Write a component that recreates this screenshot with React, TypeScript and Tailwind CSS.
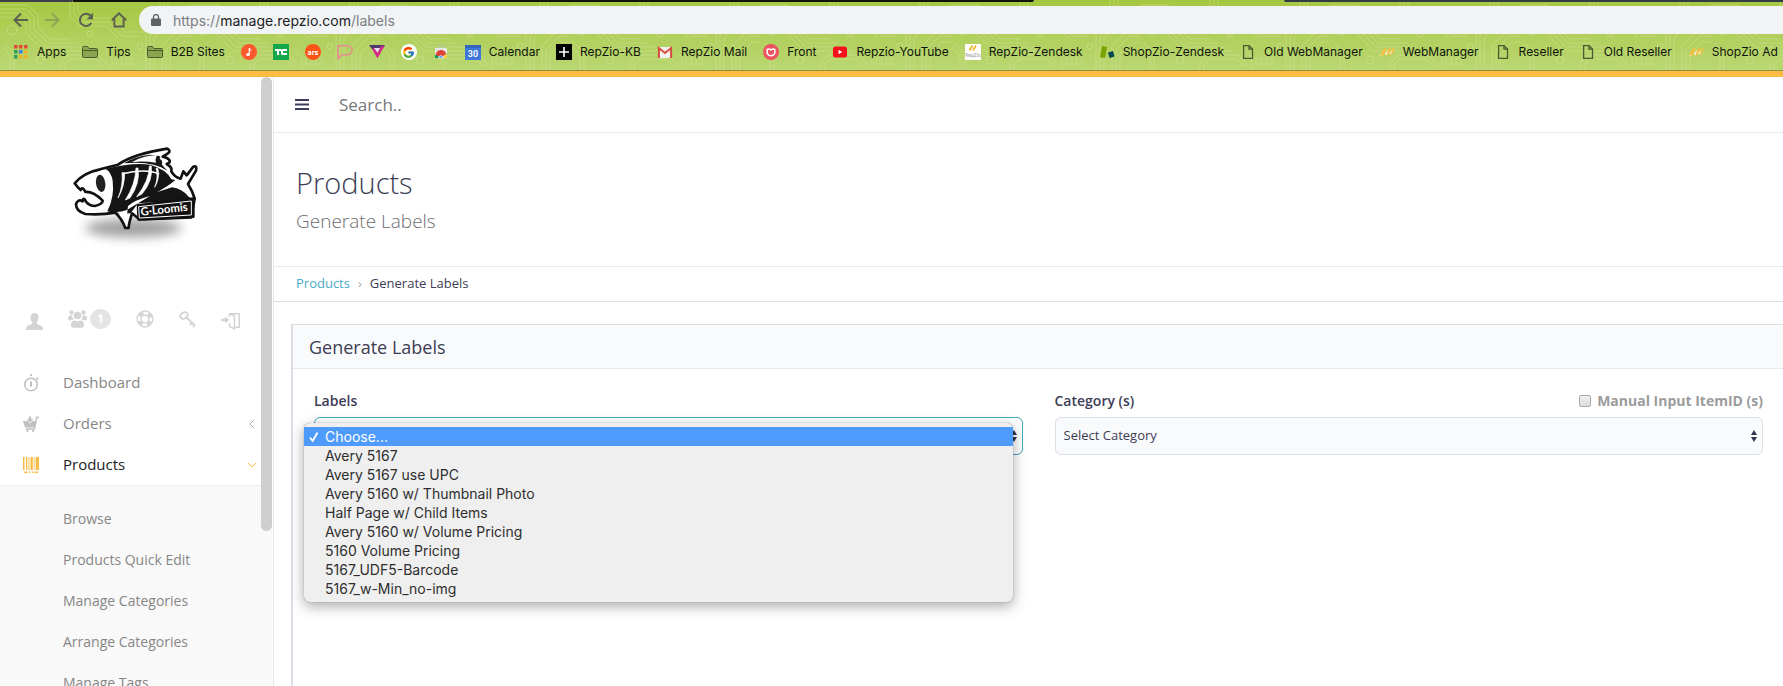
import type { ReactNode } from "react";
import { ChevronLeft, ChevronDown } from "lucide-react";
import { FcGoogle } from "react-icons/fc";

type Bookmark = { label?: string; name: string; icon: ReactNode };

const labelOptions = [
  "Choose...",
  "Avery 5167",
  "Avery 5167 use UPC",
  "Avery 5160 w/ Thumbnail Photo",
  "Half Page w/ Child Items",
  "Avery 5160 w/ Volume Pricing",
  "5160 Volume Pricing",
  "5167_UDF5-Barcode",
  "5167_w-Min_no-img",
];

const productLinks = [
  "Browse",
  "Products Quick Edit",
  "Manage Categories",
  "Arrange Categories",
  "Manage Tags",
];

function FolderIcon() {
  return (
    <svg viewBox="0 0 16 16" className="size-4" fill="none" stroke="#4d5a2e">
      <path d="M.5 12.5v-9q0-1 1-1h4l1.500 2h7.500q1 0 1 1v7q0 1-1 1h-13q-1 0-1-1z" fill="#8ba44e" />
      <path d="M.5 6.500h15" />
    </svg>
  );
}

function PageIcon() {
  return (
    <svg viewBox="0 0 16 16" className="size-4" fill="none" stroke="#4d5a2e" strokeWidth="1.300">
      <path d="M3.600 1.600h5.400l3.500 3.500v9.300h-8.900zM9 1.600v3.500h3.500" />
    </svg>
  );
}

function ManagerIcon() {
  return (
    <svg viewBox="0 0 16 16" className="size-4">
      <path d="M1 11.500l4-7h3l-3.500 7zM6 11.500l4-7h2.500l-3.500 7zM10.500 10.500l3-6H16l-3 6z" fill="#f8bf3f" />
      <path d="M5.500 10.500l3.500-5-1 5.500zM10 10l3-4.500-1 4.500z" fill="#eef2cc" />
      <path d="M0 12.500l2-2 1 1z" fill="#dfe8a0" />
    </svg>
  );
}

function AppsIcon() {
  const colors = ["#dd4b39", "#dd4b39", "#dd4b39", "#2e9e5b", "#3b82e0", "#f0b429", "#2e9e5b", "#f0b429", "#f0b429"];
  return (
    <svg viewBox="0 0 16 16" className="size-4">
      {colors.map((c, i) => (
        <rect key={i} x={1 + (i % 3) * 5} y={1 + Math.floor(i / 3) * 5} width="3.500" height="3.500" fill={c} />
      ))}
    </svg>
  );
}

const bookmarks: Bookmark[] = [
  { name: "apps", label: "Apps", icon: <AppsIcon /> },
  { name: "tips", label: "Tips", icon: <FolderIcon /> },
  { name: "b2b", label: "B2B Sites", icon: <FolderIcon /> },
  {
    name: "music",
    icon: (
      <svg viewBox="0 0 16 16" className="size-4">
        <circle cx="8" cy="8" r="8" fill="#fc5a2d" />
        <path d="M8.300 4v6.200M8.300 4.400q.3 1.500 2 1.800" stroke="#fff" strokeWidth="1.200" fill="none" />
        <ellipse cx="7" cy="10.500" rx="1.900" ry="1.600" fill="#fff" />
      </svg>
    ),
  },
  {
    name: "techcrunch",
    icon: (
      <svg viewBox="0 0 16 16" className="size-4">
        <rect width="16" height="16" fill="#14a84a" />
        <path d="M2 5h6v2H6v4H4V7H2zM14 5h-4.500Q8 5 8 6.500v3Q8 11 9.500 11H14V9h-4V7h4z" fill="#fff" />
      </svg>
    ),
  },
  {
    name: "ars",
    icon: (
      <svg viewBox="0 0 16 16" className="size-4">
        <circle cx="8" cy="8" r="8" fill="#ff5417" />
        <text x="8" y="10.500" textAnchor="middle" fontSize="7" fontWeight="700" fontFamily="Inter" fill="#fff">ars</text>
      </svg>
    ),
  },
  {
    name: "p",
    icon: (
      <svg viewBox="0 0 16 16" className="size-4" fill="none" stroke="#e98a92" strokeWidth="1.500">
        <path d="M1 15V1.700h9.500a4.500 4.500 0 0 1 0 9H5z" />
      </svg>
    ),
  },
  {
    name: "v",
    icon: (
      <svg viewBox="0 0 16 16" className="size-4">
        <path d="M0 1h16l-2.200 4H3z" fill="#4c3a70" />
        <path d="M3 5l5.500 9.500L15.500 1.500l-4 1L8.500 9 6 4z" fill="#d42a8c" />
        <path d="M5 4h6L8.500 8.500z" fill="#e8dcf4" />
      </svg>
    ),
  },
  {
    name: "google",
    icon: (
      <span className="flex size-4 items-center justify-center rounded-full bg-white">
        <FcGoogle size={13} />
      </span>
    ),
  },
  {
    name: "store",
    icon: (
      <svg viewBox="0 0 16 16" className="size-4">
        <path d="M2 4h12v10H2z" fill="#e6e6e6" />
        <path d="M5.500 4V2h5v2" fill="none" stroke="#bbb" />
        <path d="M2.500 12a5.500 5.500 0 0 1 11-1l-4 1z" fill="#db4437" />
        <path d="M2 14v-3l3.500 1 .5 2z" fill="#0f9d58" />
        <path d="M10 14l2-4 2 1v3z" fill="#ffcd40" />
        <path d="M5.700 14a2.300 2.300 0 1 1 4.600 0z" fill="#4285f4" stroke="#fff" strokeWidth=".7" />
      </svg>
    ),
  },
  {
    name: "calendar",
    label: "Calendar",
    icon: (
      <svg viewBox="0 0 16 16" className="size-4">
        <rect y="1" width="16" height="15" fill="#3f78dc" />
        <path d="M0 2.500h16" stroke="#3264c0" strokeWidth="3" />
        <text x="8" y="12.500" textAnchor="middle" fontSize="9" fontWeight="600" fontFamily="Roboto" fill="#fff">30</text>
      </svg>
    ),
  },
  {
    name: "kb",
    label: "RepZio-KB",
    icon: (
      <svg viewBox="0 0 16 16" className="size-4">
        <rect width="16" height="16" fill="#000" />
        <path d="M8 3v10M3 8h10" stroke="#fff" strokeWidth="1.600" />
      </svg>
    ),
  },
  {
    name: "mail",
    label: "RepZio Mail",
    icon: (
      <svg viewBox="0 0 16 16" className="size-4">
        <path d="M1 3h14v11H1z" fill="#f2f2f2" />
        <path d="M1.900 14V4L8 9l6.100-5v10" fill="none" stroke="#d54b3d" strokeWidth="2" />
      </svg>
    ),
  },
  {
    name: "front",
    label: "Front",
    icon: (
      <svg viewBox="0 0 16 16" className="size-4">
        <circle cx="8" cy="8" r="8" fill="#ee5361" />
        <path d="M4.200 5.500q2-1.200 3.800.5 1.800-1.700 3.800-.5.800 6.300-3.800 6.300T4.200 5.500z" fill="none" stroke="#fff" strokeWidth="1.500" />
      </svg>
    ),
  },
  {
    name: "youtube",
    label: "Repzio-YouTube",
    icon: (
      <svg viewBox="0 0 16 16" className="size-4">
        <rect x="1" y="2.500" width="14" height="11" rx="2.500" fill="#f7111a" />
        <path d="M6.500 5.800v4.400L10.300 8z" fill="#fff" />
      </svg>
    ),
  },
  {
    name: "rz",
    label: "RepZio-Zendesk",
    icon: (
      <svg viewBox="0 0 16 16" className="size-4">
        <rect width="16" height="16" fill="#fff" />
        <path d="M4.500 6.500l3-5M8 6.500l3-5" stroke="#f0b72f" strokeWidth="1.800" />
        <text x="8" y="13" textAnchor="middle" fontSize="5" fontFamily="Roboto" fill="#9a9a9a">RepZio</text>
      </svg>
    ),
  },
  {
    name: "sz",
    label: "ShopZio-Zendesk",
    icon: (
      <svg viewBox="0 0 16 16" className="size-4">
        <path d="M3 2l5 1-2 11-5-.8z" fill="#78a300" />
        <path d="M9 8.500l5-1.500 1.500 5.500-5 1.500z" fill="#03494d" />
      </svg>
    ),
  },
  { name: "oldwm", label: "Old WebManager", icon: <PageIcon /> },
  { name: "wm", label: "WebManager", icon: <ManagerIcon /> },
  { name: "reseller", label: "Reseller", icon: <PageIcon /> },
  { name: "oldreseller", label: "Old Reseller", icon: <PageIcon /> },
  { name: "shopzio", label: "ShopZio Ad", icon: <ManagerIcon /> },
];

function Browser() {
  return (
    <header className="relative shrink-0 overflow-hidden border-b border-[#8a9443] bg-linear-to-b from-[#a5c73f] to-[#bbd772] font-['Inter',sans-serif]">
      <svg className="absolute inset-0 h-full w-full" aria-hidden="true">
        <defs>
          <pattern id="circuit" width="190" height="71" patternUnits="userSpaceOnUse">
            <g fill="none" stroke="#d6e6a0" strokeOpacity=".45">
              <path d="M0 5h28l10 10v12l12 12h20M0 9h26l8 8v12l14 14h30M0 13h24l6 6v12l16 16h40M0 17h20l6 6v10l18 18h48" />
              <path d="M70 0v16l10 10h26l12 12M74 0v14l8 8h26l14 14h16M78 0v12l6 6h26l16 14h20M160 0v20l-14 14v37M164 0v22l-14 14v35M168 0v24l-14 14v33" />
              <path d="M190 30h-12l-16 16v25M190 36h-10l-14 14v21M190 42h-8l-12 12v17M10 71V55l-8-8M14 71V53L4 43M60 71v-8l8-8h30l10 10M64 71v-6l6-6h26l8 8M112 71V57l-8-8" />
              <circle cx="90" cy="34" r="3" />
              <circle cx="140" cy="46" r="3" />
              <circle cx="40" cy="60" r="4" />
              <circle cx="12" cy="30" r="5" />
              <rect x="116" y="58" width="6" height="6" />
              <rect x="126" y="58" width="6" height="6" />
            </g>
          </pattern>
        </defs>
        <rect width="100%" height="100%" fill="url(#circuit)" />
      </svg>
      <div className="relative">
        <div className="flex h-[2px]">
          <div className="w-[73px] rounded-br bg-[#3c3f4a]" />
          <div className="flex-1 rounded-br bg-[#11130f]" />
          <div className="w-[14%]" />
          <div className="w-[28%] rounded-bl bg-[#343c44]" />
        </div>
        <div className="flex h-8 items-center pt-1 pl-3">
          <nav className="flex items-center gap-[17px] text-[#5b6050]">
            <button aria-label="Back">
              <svg viewBox="0 0 16 16" className="size-4" fill="none" stroke="currentColor" strokeWidth="2">
                <path d="M16 8H3M9 1.500L2.500 8 9 14.500" />
              </svg>
            </button>
            <button aria-label="Forward" className="text-[#8ba650]">
              <svg viewBox="0 0 16 16" className="size-4" fill="none" stroke="currentColor" strokeWidth="2">
                <path d="M0 8h13M7 1.500L13.500 8 7 14.500" />
              </svg>
            </button>
            <button aria-label="Reload">
              <svg viewBox="0 0 16 16" className="size-4">
                <path d="M13.300 11A6.100 6.100 0 1 1 12.500 3.700L14 5.200" fill="none" stroke="currentColor" strokeWidth="2" />
                <path d="M15 .8v6.400H8.600z" fill="currentColor" />
              </svg>
            </button>
            <button aria-label="Home">
              <svg viewBox="0 0 16 16" className="size-4" fill="none" stroke="currentColor" strokeWidth="1.900">
                <path d="M.8 8.300L8 1.300l7.200 7M3.400 7v7.500h9.200V7" />
              </svg>
            </button>
          </nav>
          <div className="ml-3 flex h-7 flex-1 items-center gap-3 rounded-l-full bg-[#f1f3f4] pl-3 text-[14px]">
            <svg viewBox="0 0 10 12" className="h-3 w-[10px]">
              <rect y="4.500" width="10" height="7.500" rx="1" fill="#5f6368" />
              <path d="M2.500 5V3a2.500 2.500 0 0 1 5 0v2" fill="none" stroke="#5f6368" strokeWidth="1.300" />
            </svg>
            <p className="text-[#7a7e83]">
              https://<span className="text-[#202124]">manage.repzio.com</span>/labels
            </p>
          </div>
        </div>
        <nav className="flex h-9 items-center gap-4 overflow-hidden pl-[13px] text-[12px] text-[#10140a]">
          {bookmarks.map((b) => (
            <a key={b.name} href="#" aria-label={b.label ?? b.name} className="flex shrink-0 items-center gap-2 whitespace-nowrap">
              {b.icon}
              {b.label}
            </a>
          ))}
        </nav>
      </div>
    </header>
  );
}

function FishLogo() {
  return (
    <svg viewBox="0 0 510 390" className="ml-[50px] h-[130px] w-[170px]">
      <defs>
        <filter id="soft" x="-30%" y="-100%" width="160%" height="300%">
          <feGaussianBlur stdDeviation="16" />
        </filter>
      </defs>
      <ellipse cx="250" cy="294" rx="145" ry="28" fill="#777" opacity=".7" filter="url(#soft)" />
      <path
        d="M74 160Q100 128 150 118L204 104Q250 72 352 56Q364 62 354 70L338 80Q364 86 358 98L350 102Q368 112 364 124Q374 142 392 146L400 124L410 136L430 110Q442 106 438 122L414 162Q428 184 434 206L424 262L268 268L246 250Q236 282 236 294L226 294Q216 266 196 248Q150 256 106 252Q78 244 78 222Q84 206 98 214Q98 204 104 208Q112 228 134 228Q158 222 158 212Q130 184 106 186Q98 168 92 180Q82 172 74 160z"
        fill="#fff" stroke="#111" strokeWidth="8" strokeLinejoin="round"
      />
      {/* body */}
      <path d="M166 116Q250 96 300 104Q350 118 364 148L376 150Q356 168 322 186L366 172Q396 176 416 200L432 210L264 220L242 250L198 252L172 244Q194 200 188 152Q184 126 166 116z" fill="#151515" />
      {/* dorsal fin */}
      <path d="M222 100Q250 80 300 74L328 78Q340 90 336 104L352 122Q308 92 222 100z" fill="#191919" />
      <path d="M246 96Q286 74 322 76Q314 86 318 98Q284 92 246 96z" fill="#fff" />
      <path d="M330 84q14 8 10 18l12 14" fill="none" stroke="#fff" strokeWidth="5" />
      {/* ribs */}
      <path d="M216 128q4 38-12 76 20-34 20-76zM258 114q-2 50-32 96l14-6q32-46 24-90zM298 108q0 44-38 92l16-8q34-40 28-84zM318 114q8 26-4 58 16-26 10-56z" fill="#fff" stroke="#fff" strokeWidth="2" />
      <path d="M216 132q70-18 112 0" fill="none" stroke="#fff" strokeWidth="4" />
      <path d="M330 182l44-26 34-8-6 20q14 12 18 28-24-26-48-28z" fill="#fff" />
      <ellipse cx="152" cy="160" rx="14" ry="26" fill="#222" transform="rotate(-8 152 160)" />
      <path d="M200 246q30-2 44-14l56-34q-46 12-66 30l-6 52q-10-24-28-34z" fill="#fff" />
      {/* name plate */}
      <path d="M264 226l166-20v54l-164 8z" fill="#111" stroke="#111" strokeWidth="8" strokeLinejoin="round" />
      <path d="M266 230l158-17v42l-156 9z" fill="none" stroke="#fff" strokeWidth="3" />
      <text x="273" y="257" fontSize="34" fontWeight="700" fontFamily="Lato" fill="#fff" transform="rotate(-6 273 257)">G·Loomis</text>
    </svg>
  );
}

function UserTools() {
  return (
    <div className="mt-[47px] flex h-6 items-center gap-[25px] pl-[26px] text-[#d4d4d4]">
      <a href="#" aria-label="Profile">
        <svg viewBox="0 0 17 17" className="mt-1 size-[17px]" fill="currentColor">
          <path d="M8.500 0q4 0 4 4.500 0 3-1.800 4.800v1.200q1 1.500 4 2Q17 13.200 17 17H0q0-3.800 2.300-4.500 3-.5 4-2V9.300Q4.500 7.500 4.500 4.500 4.500 0 8.500 0z" />
        </svg>
      </a>
      <a href="#" aria-label="Groups" className="flex items-center gap-[3px]">
        <svg viewBox="0 0 19 18" className="h-[18px] w-[19px]" fill="currentColor">
          <circle cx="3.500" cy="2.500" r="2.200" />
          <circle cx="15.500" cy="2.500" r="2.200" />
          <circle cx="9.500" cy="5.500" r="3.800" />
          <path d="M0 8.500q0-3 2.500-3H4q.4 2.700 2 4-2.500 0-3.500 1Q0 11 0 8.500zM19 8.500q0-3-2.500-3H15q-.4 2.700-2 4 2.500 0 3.500 1Q19 11 19 8.500zM3 15q0-4.500 3.500-4.500 3 1.500 6 0Q16 10.500 16 15q0 2.700-2.500 2.700h-8Q3 17.700 3 15z" />
        </svg>
        <span className="flex h-5 w-[21px] items-center justify-center rounded-full bg-[#e4e4e4] font-['Open_Sans',sans-serif] text-[12px] font-bold text-white">
          1
        </span>
      </a>
      <a href="#" aria-label="Help">
        <svg viewBox="0 0 18 18" className="size-[18px]" fill="none" stroke="currentColor">
          <circle cx="9" cy="9" r="8" strokeWidth="1.300" />
          <circle cx="9" cy="9" r="3.800" strokeWidth="1.300" />
          <circle cx="9" cy="9" r="6" strokeWidth="4" strokeDasharray="4.700 4.720" strokeDashoffset="-2.350" />
        </svg>
      </a>
      <a href="#" aria-label="Keys">
        <svg viewBox="0 0 17 17" className="size-[17px]" fill="none" stroke="currentColor">
          <ellipse cx="5" cy="4.500" rx="4" ry="3" strokeWidth="2" transform="rotate(-35 5 4.500)" />
          <path d="M7.500 6.500l8.500 8M11 14l2.500-3M14 16l2-2.500" strokeWidth="2" />
        </svg>
      </a>
      <a href="#" aria-label="Log out">
        <svg viewBox="0 0 19 18" className="mt-1 h-[18px] w-[19px]" fill="none" stroke="currentColor">
          <path d="M8.500 5V1.700h9.700v13.500h-4" strokeWidth="1.500" />
          <path d="M8.500 1.700L13.500 4v13l-5-2.500V11" strokeWidth="1.500" />
          <path d="M0 8h5" strokeWidth="2.500" />
          <path d="M4 4.500L8.500 8 4 11.500z" fill="currentColor" stroke="none" />
        </svg>
      </a>
    </div>
  );
}

function Sidebar() {
  return (
    <aside className="relative w-[274px] shrink-0 overflow-hidden border-r border-[#e7e9ec] pt-[53px]">
      <FishLogo />
      <UserTools />
      <nav className="mt-[31px] text-[15px] text-[#868686]">
        <a href="#" className="flex h-[41px] items-center gap-6 pr-[13px] pl-[23px]">
          <svg viewBox="0 0 16 18" className="h-[18px] w-4" fill="none" stroke="#c0c0c0">
            <circle cx="8" cy="10.500" r="6.300" strokeWidth="1.600" />
            <path d="M8 7.500v5" strokeWidth="2" />
            <path d="M7 1.200h2M13.500 4l1.300 1.300" strokeWidth="1.800" />
          </svg>
          Dashboard
        </a>
        <a href="#" className="flex h-[41px] items-center gap-6 pr-[13px] pl-[23px]">
          <svg viewBox="0 0 16 16" className="size-4" fill="#c0c0c0">
            <path d="M0 5h13l-1.500 6.500H2z" />
            <path d="M16 1.300h-2.200L11.500 13H3" fill="none" stroke="#c0c0c0" strokeWidth="1.400" />
            <path d="M5.500 0h3v2.800h2.700L7 7.200 2.800 2.800h2.700z" stroke="#fff" strokeWidth=".8" />
            <circle cx="4.500" cy="14.900" r="1.100" />
            <circle cx="10" cy="14.900" r="1.100" />
          </svg>
          <span className="flex-1">Orders</span>
          <ChevronLeft size={16} strokeWidth={1.5} color="#aaa" />
        </a>
        <a href="#" className="flex h-[41px] items-center gap-6 pr-[13px] pl-[23px] text-[#1c1c1c]">
          <svg viewBox="0 0 16 16" className="size-4" fill="#f8bc46">
            <path d="M0 0h1.500v13H0zM3 0h1.300v13H3zM5.500 0h.8v13h-.8zM7.500 0h2.300v13H7.500zM10.800 0h.8v13h-.8zM12.700 0H16v13h-3.300zM1 14.500h3.500V16H1zM6 14.500h1.500V16H6zM9 14.500h1.500V16H9zM11.500 14.500H15V16h-3.500z" />
          </svg>
          <span className="flex-1">Products</span>
          <ChevronDown size={16} strokeWidth={1.5} color="#f8bc46" />
        </a>
      </nav>
      <ul className="border-t border-[#eee] bg-[#f9f9f9] pt-3 text-[14px] text-[#868686]">
        {productLinks.map((link) => (
          <li key={link}>
            <a href="#" className="flex h-[41px] items-center pl-[63px]">
              {link}
            </a>
          </li>
        ))}
      </ul>
      <div className="absolute top-0 right-px h-[454px] w-[11px] rounded-full bg-[#cfcfcf]" />
    </aside>
  );
}

function SortArrows() {
  return (
    <svg viewBox="0 0 6 12" className="pointer-events-none absolute top-[13px] right-[6px] h-3 w-[6px]" fill="#33334f">
      <path d="M3 0l3 5H0zM3 12l3-5H0z" />
    </svg>
  );
}

function LabelsMenu() {
  return (
    <ul
      role="listbox"
      aria-label="Labels"
      className="absolute top-[6px] -left-[10px] w-full rounded-md bg-[#efefef] py-1 font-['Inter',sans-serif] text-[14px] text-[#2e2e2e] shadow-[0_4px_14px_rgba(0,0,0,0.35),0_0_1px_rgba(0,0,0,0.5)]"
    >
      {labelOptions.map((option, i) => (
        <li
          key={option}
          role="option"
          aria-selected={i === 0}
          className="flex h-[19px] items-center pl-[21px] aria-selected:bg-[#4f9bfb] aria-selected:pl-[5px] aria-selected:text-white"
        >
          {i === 0 && (
            <svg viewBox="0 0 10 10" className="mr-[6px] size-[10px]" fill="none" stroke="#fff" strokeWidth="1.800">
              <path d="M1 5.500L3.700 9 8.500.5" />
            </svg>
          )}
          {option}
        </li>
      ))}
    </ul>
  );
}

export default function App() {
  return (
    <div className="flex h-screen flex-col overflow-hidden bg-white font-['Open_Sans',sans-serif]">
      <Browser />
      <div className="h-[6px] shrink-0 bg-[#fbbc42]" />
      <div className="flex min-h-0 flex-1">
        <Sidebar />
        <main className="min-w-0 flex-1 overflow-hidden text-[#3d3d55]">
          <div className="flex h-14 items-center border-b border-[#e7eaec] pl-[21px]">
            <button aria-label="Toggle menu">
              <svg viewBox="0 0 14 12" className="h-3 w-[14px]" stroke="#3b3b5c" strokeWidth="2">
                <path d="M0 1h14M0 5.500h14M0 10h14" />
              </svg>
            </button>
            <input
              type="text"
              aria-label="Search"
              placeholder="Search.."
              className="ml-[30px] flex-1 text-[17px] outline-none placeholder:text-[#777]"
            />
          </div>

          <div className="border-b border-[#e7eaec] pt-[30px] pb-[26px] pl-[22px]">
            <h1 className="text-[29px] leading-10 font-light">Products</h1>
            <p className="text-[19px] leading-[37px] font-light text-[#6e6e6e]">Generate Labels</p>
          </div>

          <nav className="flex h-[35px] items-center gap-2 border-b border-[#d9e1e4] pb-px pl-[22px] text-[13px]">
            <a href="#" className="text-[#4aabc9]">Products</a>
            <span className="text-[#aaa]">›</span>
            <span>Generate Labels</span>
          </nav>

          <section className="mt-[22px] ml-[17px] h-full border-t border-l-2 border-[#dcdee6]">
            <h2 className="flex h-11 items-center border-b border-[#e7eaec] bg-[#f9fafc] pt-px pl-4 text-[18px]">
              Generate Labels
            </h2>
            <div className="grid grid-cols-2 gap-8 pt-[22px] pr-5 pl-[21px] text-[14px]">
              <div>
                <label htmlFor="labels" className="block h-[26px] leading-5 font-semibold">Labels</label>
                <div className="relative">
                  <select id="labels" className="h-[38px] w-full appearance-none rounded-md border border-[#3fa9c4] bg-white px-2 text-[13px]">
                    <option>Choose...</option>
                  </select>
                  <SortArrows />
                  <LabelsMenu />
                </div>
              </div>
              <div>
                <div className="flex h-[26px] items-start justify-between leading-5 font-semibold">
                  <label htmlFor="category">Category (s)</label>
                  <label className="flex items-center gap-[6px] font-bold text-[#9b9b9b]">
                    <input
                      type="checkbox"
                      className="size-3 appearance-none rounded-xs border border-[#a9a9a9] bg-linear-to-b from-[#f0f0f0] to-[#dcdcdc]"
                    />
                    Manual Input ItemID (s)
                  </label>
                </div>
                <div className="relative">
                  <select id="category" className="h-[38px] w-full appearance-none rounded-md border border-[#dcdfe6] bg-[#f9fafc] px-2 text-[13px]">
                    <option>Select Category</option>
                  </select>
                  <SortArrows />
                </div>
              </div>
            </div>
          </section>
        </main>
      </div>
    </div>
  );
}
